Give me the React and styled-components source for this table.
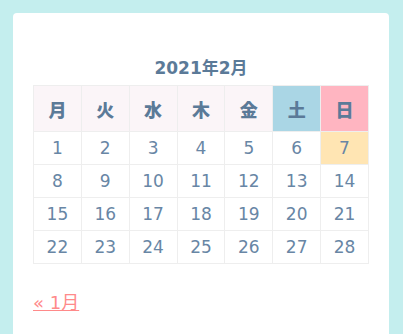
import React from "react"
import styled, { createGlobalStyle } from "styled-components"

const GlobalStyle = createGlobalStyle`
html, body {
    margin: 0;
    padding: 0;
    background: #c4eeee;
}
body {
    font-family: "DejaVu Sans", "Noto Sans CJK JP", sans-serif;
    color: #5f7e9c;
}
`

const weekdays = [
    { label: "月" },
    { label: "火" },
    { label: "水" },
    { label: "木" },
    { label: "金" },
    { label: "土", tone: "sat" },
    { label: "日", tone: "sun" },
]

const weeks = [
    [1, 2, 3, 4, 5, 6, 7],
    [8, 9, 10, 11, 12, 13, 14],
    [15, 16, 17, 18, 19, 20, 21],
    [22, 23, 24, 25, 26, 27, 28],
]

const today = 7

export default function App() {
    return (
        <>
            <GlobalStyle />
            <Page>
                <Card>
                    <Calendar>
                        <Caption>2021年2月</Caption>
                        <thead>
                            <tr>
                                {weekdays.map(day => (
                                    <HeadCell key={day.label} $tone={day.tone}>{day.label}</HeadCell>
                                ))}
                            </tr>
                        </thead>
                        <tbody>
                            {weeks.map((week, i) => (
                                <tr key={i}>
                                    {week.map(d => (
                                        <DayCell key={d} $today={d === today}>{d}</DayCell>
                                    ))}
                                </tr>
                            ))}
                        </tbody>
                    </Calendar>
                    <Nav>
                        <PrevLink href="#">« 1月</PrevLink>
                    </Nav>
                </Card>
            </Page>
        </>
    )
}

const Page = styled.div`
height: 334px;
overflow: hidden;
padding: 13px 14px 0 13px;
box-sizing: border-box;
`

const Card = styled.div`
background: #fff;
border-radius: 4px;
padding: 20px 20px 30px 20px;
min-height: 320px;
`

const Calendar = styled.table`
width: 100%;
border-collapse: collapse;
table-layout: fixed;
`

const Caption = styled.caption`
font-family: "DejaVu Sans", "Noto Sans CJK JP", sans-serif;
font-weight: bold;
font-size: 17px;
line-height: 20px;
padding: 25px 0 7px;
text-align: center;
color: #5b7a98;
`

const toneColors = {
    sat: "#aad6e5",
    sun: "#ffb5c1",
}

const HeadCell = styled.th`
height: 45px;
padding: 0;
border: 1px solid #eeeeee;
background: ${p => toneColors[p.$tone] || "#fbf5f8"};
font-family: "Noto Sans CJK JP", sans-serif;
font-weight: 900;
font-size: 18px;
color: #5b7a98;
text-align: center;
`

const DayCell = styled.td`
height: 32px;
padding: 0;
border: 1px solid #eeeeee;
background: ${p => (p.$today ? "#ffe5b3" : "#fff")};
font-size: 17px;
text-align: center;
color: #6886a5;
`

const Nav = styled.div`
margin-top: 24px;
`

const PrevLink = styled.a`
font-family: "DejaVu Sans", "Noto Sans CJK JP", sans-serif;
font-size: 18px;
color: #ff8a8a;
text-decoration: underline;
`
